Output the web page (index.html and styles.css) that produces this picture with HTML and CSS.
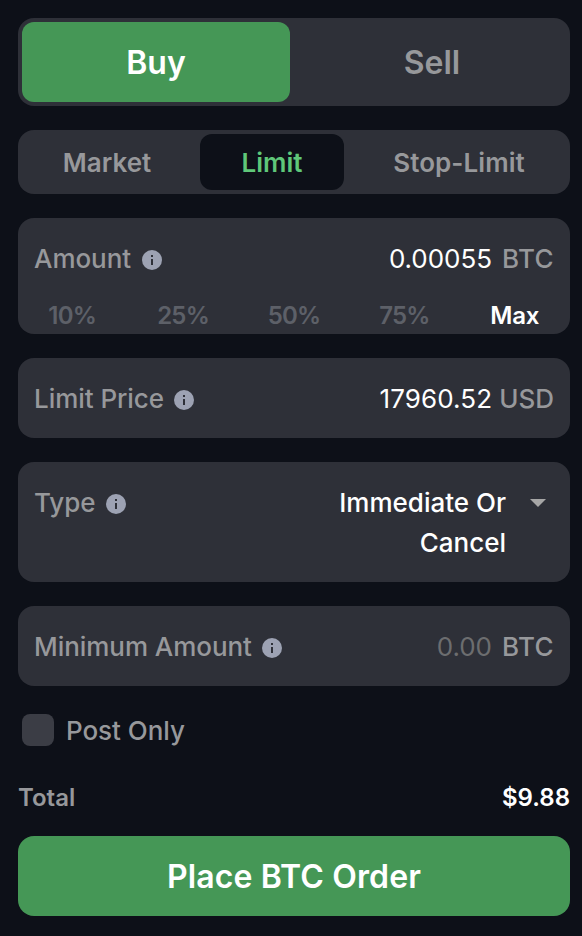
FILE: index.html
```html
<!DOCTYPE html>
<html lang="en">
<head>
<meta charset="utf-8">
<title>Order form</title>
<link rel="stylesheet" href="styles.css">
</head>
<body>
<svg width="0" height="0" class="defs"><symbol id="info" viewBox="0 0 20 20"><circle cx="10" cy="10" r="10" fill="#9da2b3"/><path d="M9 5h2v2H9zM9 9h2v6H9z" fill="#2e3038"/></symbol></svg>
<form class="order">
  <div class="side">
    <button type="button" class="side-btn active">Buy</button>
    <button type="button" class="side-btn sell">Sell</button>
  </div>
  <div class="kinds">
    <button type="button" class="kind market">Market</button>
    <button type="button" class="kind limit">Limit</button>
    <button type="button" class="kind stop">Stop-Limit</button>
  </div>
  <section class="card amount">
    <div class="row">
      <span class="label">Amount</span><svg class="info"><use href="#info"/></svg>
      <span class="value">0.00055</span><span class="unit">BTC</span>
    </div>
    <div class="percents"><span>10%</span><span>25%</span><span>50%</span><span>75%</span><span class="max">Max</span></div>
  </section>
  <section class="card price">
    <div class="row">
      <span class="label">Limit Price</span><svg class="info"><use href="#info"/></svg>
      <span class="value">17960.52</span><span class="unit">USD</span>
    </div>
  </section>
  <section class="card type">
    <div class="row">
      <span class="label">Type</span><svg class="info"><use href="#info"/></svg>
      <span class="choice">Immediate Or<br>Cancel</span>
      <svg class="caret" viewBox="0 0 16 8"><path d="M0 0h16L8 8z" fill="#a6a6a6"/></svg>
    </div>
  </section>
  <section class="card minimum">
    <div class="row">
      <span class="label">Minimum Amount</span><svg class="info"><use href="#info"/></svg>
      <span class="value empty">0.00</span><span class="unit">BTC</span>
    </div>
  </section>
  <div class="post"><span class="box"></span><span class="label">Post Only</span></div>
  <div class="total"><span>Total</span><span class="sum">$9.88</span></div>
  <button type="button" class="submit">Place BTC Order</button>
</form>
</body>
</html>
```
FILE: styles.css
```css
* { box-sizing: border-box; }
body { margin: 0; background: #0d1018; font-family: Inter, sans-serif; color: #97989b; }
button { border: 0; padding: 0; background: none; font: inherit; color: inherit; }
.defs { position: absolute; }
.order { padding: 18px 12px 20px 18px; display: flex; flex-direction: column; }
.side { height: 88px; padding: 4px; border-radius: 16px; background: #2e3038; display: grid; grid-template-columns: 268px 1fr; font-size: 32px; font-weight: 600; }
.side-btn { border-radius: 12px; }
.side-btn.active { background: #459756; color: #fff; }
.sell { padding-left: 8px; }
.kinds { margin-top: 24px; height: 64px; padding: 4px; border-radius: 16px; background: #2e3038; display: grid; grid-template-columns: 178px 144px 1fr; font-size: 26px; font-weight: 600; }
.kind { border-radius: 12px; }
.kind.market { padding-right: 8px; }
.kind.limit { background: #0d1018; color: #5fc779; }
.kind.stop { padding-left: 8px; letter-spacing: 0.08px; }
.card { margin-top: 24px; border-radius: 16px; background: #2e3038; padding: 21px 16px 0; height: 80px; font-size: 26px; line-height: 40px; }
.row { display: flex; align-items: flex-start; }
.label { font-weight: 500; letter-spacing: -0.05px; white-space: nowrap; }
.info { width: 20px; height: 20px; margin: 11px 0 0 10px; flex: none; }
.amount .info, .type .info { margin-left: 11px; }
.value { margin-left: auto; color: #fff; letter-spacing: -0.05px; }
.price .value { letter-spacing: 0.1px; }
.value.empty { color: #6c6d6f; }
.unit { margin-left: 10px; font-weight: 500; letter-spacing: 0.4px; }
.price .unit { margin-left: 7px; letter-spacing: 0; }
.amount { height: 116px; }
.percents { display: grid; grid-template-columns: repeat(5, 1fr); margin: 17px -16px 0; font-size: 24px; font-weight: 600; letter-spacing: -0.8px; text-align: center; color: #5d6068; }
.percents span:first-child { padding-right: 2px; }
.percents span:nth-child(2) { padding-right: 1px; }
.max { color: #fff; letter-spacing: -0.1px; }
.type { height: 120px; }
.choice { margin-left: auto; text-align: right; color: #fff; font-weight: 500; }
.caret { width: 16px; height: 8px; margin: 16px 8px 0 24px; }
.post { margin-top: 24px; height: 40px; padding-left: 4px; display: flex; align-items: center; gap: 12px; font-size: 26px; }
.box { width: 32px; height: 32px; border-radius: 8px; background: #3b3d45; }
.total { margin-top: 28px; height: 40px; display: flex; justify-content: space-between; font-size: 24px; font-weight: 600; line-height: 40px; }
.sum { color: #fff; }
.submit { margin-top: 18px; height: 80px; border-radius: 16px; background: #459756; color: #fff; font-size: 32px; font-weight: 600; letter-spacing: 0.12px; }
```
